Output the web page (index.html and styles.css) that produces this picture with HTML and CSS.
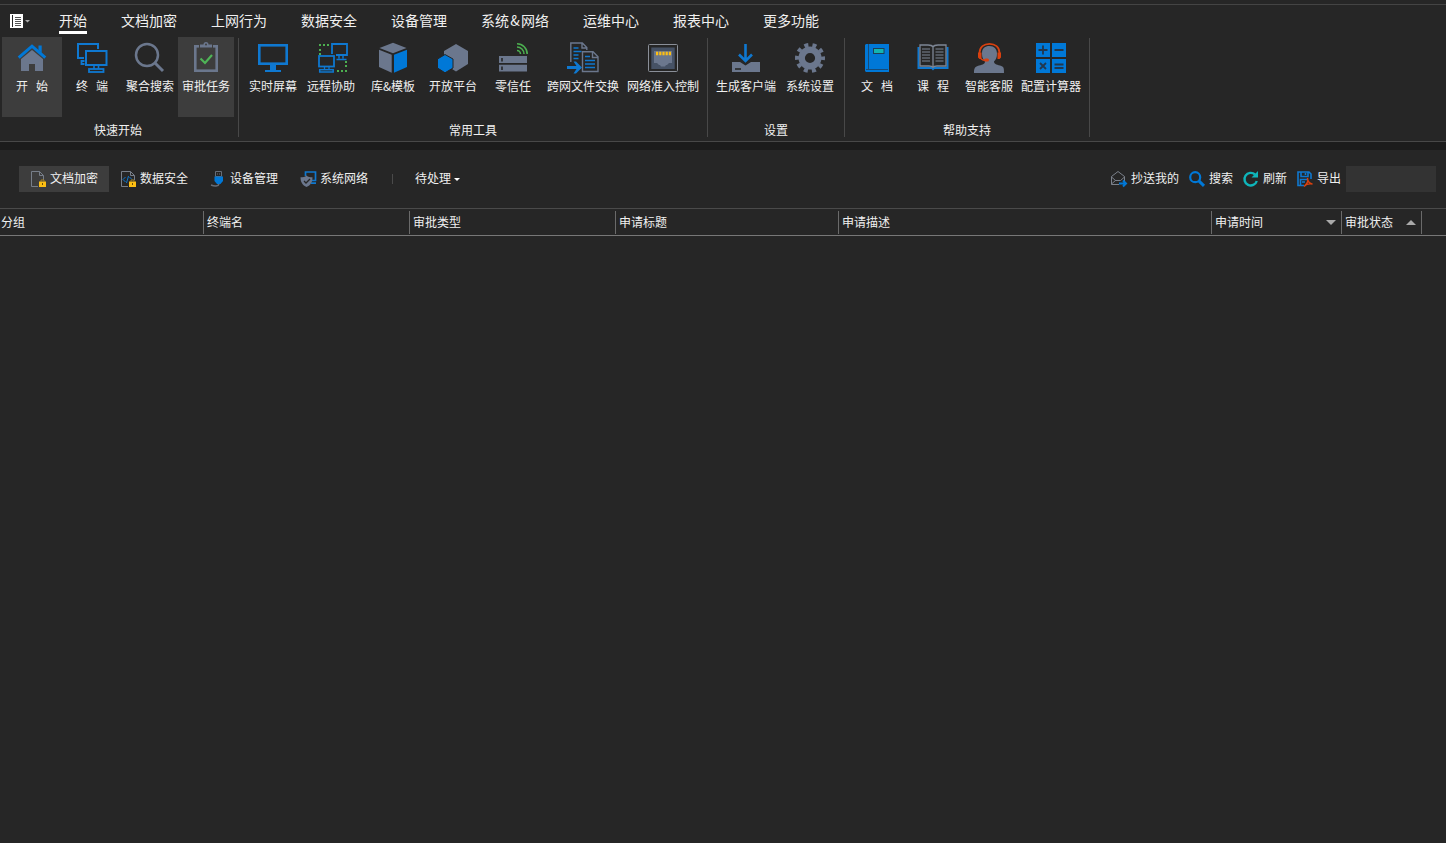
FILE: index.html
```
<!DOCTYPE html>
<html lang="zh-CN">
<head>
  <meta charset="UTF-8">
  <meta name="viewport" content="width=device-width, initial-scale=1.0">
  <title>审批任务</title>
  <link rel="stylesheet" href="styles.css">
</head>
<body>
  <!-- Top menu tabs -->
  <nav class="menu">
    <button class="app-menu">
      <svg width="20" height="14" viewBox="0 0 20 14">
        <rect width="13" height="14" fill="#fff"/>
        <path d="M2.5 1v12" stroke="#262626"/>
        <path d="M5 3.5h6M5 5.5h6M5 7.5h6M5 9.5h6M5 11.5h6" stroke="#555"/>
        <path d="M15 6h5l-2.5 2.5z" fill="#aaa"/>
      </svg>
    </button>
    <a class="tab active">开始</a>
    <a class="tab">文档加密</a>
    <a class="tab">上网行为</a>
    <a class="tab">数据安全</a>
    <a class="tab">设备管理</a>
    <a class="tab">系统<span class="amp">&amp;</span>网络</a>
    <a class="tab">运维中心</a>
    <a class="tab">报表中心</a>
    <a class="tab">更多功能</a>
  </nav>

  <!-- Ribbon -->
  <div class="ribbon">
    <div class="group first">
      <div class="tools">
        <button class="tool w60 selected">
          <svg viewBox="0 0 32 32">
            <path d="M5 17L16 8l11 9v12h-8v-7h-6v7H5z" fill="#6b778d"/>
            <path d="M22.5 3.500h3.200V11l-3.200-3z" fill="#0078d7"/>
            <path d="M2.700 15.700L16 4.200l13.300 11.500" fill="none" stroke="#0078d7" stroke-width="3"/>
          </svg>
          <span class="spaced">开始</span>
        </button>
        <button class="tool w60">
          <svg viewBox="0 0 32 32" fill="none" stroke="#0f78d0" stroke-width="2">
            <path d="M22 7V2H2v14h6"/>
            <path d="M8.500 19H5.500v3H8.500" stroke-width="1.800"/>
            <rect x="10" y="9" width="20.500" height="14"/>
            <path d="M18 24v3M22.500 24v3" stroke-width="1.600"/>
            <rect x="13" y="27" width="14.500" height="3" stroke-width="1.800"/>
          </svg>
          <span class="spaced">终端</span>
        </button>
        <button class="tool w56">
          <svg class="left" viewBox="0 0 32 32" fill="none" stroke="#6b778d">
            <circle cx="14" cy="13" r="11" stroke-width="2.500"/>
            <path d="M22 21l8 8" stroke-width="3"/>
          </svg>
          <span>聚合搜索</span>
        </button>
        <button class="tool w56 selected">
          <svg viewBox="0 0 32 32" fill="none" stroke="#6b778d">
            <rect x="5.300" y="4.300" width="21.400" height="24.400" stroke-width="2.600"/>
            <path d="M9 2v5h14V2z" fill="#3d3d3d" stroke="none"/>
            <path d="M10 2.500h3.500a2.500 2.500 0 0 1 5 0H22v3H10z" fill="#6b778d" stroke="none"/>
            <circle cx="16" cy="2.500" r="1" fill="#3d3d3d" stroke="none"/>
            <path d="M10.500 16.500l4.500 4.500 7-8" stroke="#4fb457" stroke-width="2.200"/>
          </svg>
          <span>审批任务</span>
        </button>
      </div>
      <div class="group-name">快速开始</div>
    </div>

    <div class="group">
      <div class="tools">
        <button class="tool w60">
          <svg viewBox="0 0 32 32">
            <rect x="2.300" y="3.300" width="27.400" height="18.400" fill="none" stroke="#0f78d0" stroke-width="2.600"/>
            <path d="M13 22h6v6h5v2H8v-2h5z" fill="#0f78d0"/>
          </svg>
          <span>实时屏幕</span>
        </button>
        <button class="tool w60">
          <svg viewBox="0 0 32 32" fill="none" stroke="#0f78d0" stroke-width="1.800">
            <path d="M2 3h10M3 7v7M20 29h10M29 19v8" stroke="#4caf50" stroke-width="2" stroke-dasharray="2 2"/>
            <path d="M15 12V2h15v11H19"/>
            <path d="M19.500 17.500h10M22 14v2.500M26 14v2.500" stroke-width="1.500"/>
            <rect x="2" y="14" width="15" height="10.500"/>
            <path d="M7.500 25v3M12 25v3" stroke-width="1.300"/>
            <rect x="2.700" y="27.700" width="13.500" height="2.300" stroke-width="1.500"/>
          </svg>
          <span class="nudge">远程协助</span>
        </button>
        <button class="tool w60">
          <svg viewBox="0 0 32 32">
            <path d="M16 .8L29.500 6 16 11.200 2.500 6zM2 7.800l12.700 5v18L2 25z" fill="#6b778d"/>
            <path d="M17 12.800l13-5V25l-13 5.800z" fill="#0078d7"/>
          </svg>
          <span>库&amp;模板</span>
        </button>
        <button class="tool w60">
          <svg viewBox="0 0 32 32">
            <path d="M19 2l12 7v13l-12 7.500L7 22V9z" fill="#6b778d"/>
            <path d="M8 12.500l8 4.500v9l-8 4.800L.5 26v-9z" fill="#0078d7" stroke="#262626"/>
          </svg>
          <span>开放平台</span>
        </button>
        <button class="tool w60">
          <svg viewBox="0 0 32 32">
            <path d="M2 14h28v7H2zM2 22.800h28v6.700H2z" fill="#6b778d"/>
            <path d="M5 16v3.500M5 24.500V28" stroke="#262626" stroke-width="1.600"/>
            <path d="M20 8.500a3.500 3.500 0 0 1 3.500 3.500M20 5a7 7 0 0 1 7 7M20 1.800A10.200 10.200 0 0 1 30.200 12" fill="none" stroke="#4caf50" stroke-width="1.600"/>
          </svg>
          <span>零信任</span>
        </button>
        <button class="tool w80">
          <svg viewBox="0 0 32 32" fill="none" stroke-width="1.400">
            <path d="M3.800 20V1h11.500l4.500 4.500V8M15 1v5h5M14 26h-3" stroke="#6b778d"/>
            <path d="M6.500 6h5M6.500 9.500h8M6.500 13h5M6.500 16.500h5" stroke="#0f78d0"/>
            <path d="M15.500 29.500V9.800H26l5 5v14.700zM25.500 10v5.500H31" stroke="#6b778d"/>
            <path d="M18 14.500h5M18 18.500h10M18 22h10M18 25.500h10" stroke="#0f78d0"/>
            <path d="M0 25.500h12M6.500 19.500h2.500l6 6-6 6H6.500l4-6z" stroke="none" fill="#0f78d0"/>
            <path d="M0 25.500h12" stroke="#0f78d0" stroke-width="3"/>
          </svg>
          <span>跨网文件交换</span>
        </button>
        <button class="tool w80">
          <svg viewBox="0 0 32 32">
            <rect x="1.500" y="2.500" width="29" height="27" rx="1" fill="none" stroke="#8a8f98"/>
            <rect x="4.300" y="5.500" width="23.400" height="21.500" fill="#465265"/>
            <path d="M7 9h18v12h-3l-2 2h-1l-1 1.500h-4L13 23h-1l-2-2H7z" fill="#6b778d"/>
            <path d="M9 11.500h15" stroke="#fdbf13" stroke-width="3.400" stroke-dasharray="2.200 1"/>
          </svg>
          <span>网络准入控制</span>
        </button>
      </div>
      <div class="group-name">常用工具</div>
    </div>

    <div class="group">
      <div class="tools">
        <button class="tool w68">
          <svg viewBox="0 0 32 32">
            <path d="M2 20h8l5.500 3.500L21 20h9v10H2z" fill="#6b778d"/>
            <path d="M5 27h6" stroke="#262626" stroke-width="1.600"/>
            <path d="M15.500 2v17M9 12.500l6.500 6.500 6.500-6.500" fill="none" stroke="#0f78d0" stroke-width="2.600"/>
          </svg>
          <span>生成客户端</span>
        </button>
        <button class="tool w60">
          <svg viewBox="0 0 32 32" fill="none" stroke="#6b778d">
            <circle cx="16" cy="16" r="8.300" stroke-width="6.400"/>
            <circle cx="16" cy="16" r="13" stroke-width="4" stroke-dasharray="4 4.168" stroke-dashoffset="2"/>
          </svg>
          <span>系统设置</span>
        </button>
      </div>
      <div class="group-name">设置</div>
    </div>

    <div class="group">
      <div class="tools">
        <button class="tool w56">
          <svg viewBox="0 0 32 32">
            <path d="M5 2h23v28H5l-1-1V3z" fill="#0078d7"/>
            <path d="M7.500 2v25M5 27.500h22" stroke="#164b78" fill="none"/>
            <rect x="12.500" y="6.500" width="10.500" height="5" fill="#13b5b1" stroke="#1c3e57"/>
          </svg>
          <span class="spaced">文档</span>
        </button>
        <button class="tool w56">
          <svg viewBox="0 0 32 32" fill="none">
            <path d="M1.500 5v21H15l1 1 1-1h13.500V5" stroke="#0f78d0" stroke-width="2"/>
            <path d="M16 5c-1-2-3-2-5-2H3v21h9c2 0 3 0 4 1.500C17 24 18 24 20 24h9V3h-8c-2 0-4 0-5 2zv20" stroke="#7d8695" stroke-width="1.300" fill="#262626"/>
            <path d="M5 7h8M5 10h8M5 13h8M5 16h8M5 19h8M18.500 7h8M18.500 10h8M18.500 13h8M18.500 16h8M18.500 19h8" stroke="#7d8695"/>
          </svg>
          <span class="spaced">课程</span>
        </button>
        <button class="tool w56">
          <svg viewBox="0 0 32 32">
            <path d="M1 31c0-5 1-6.500 5-7.500 4-1 6-1.500 6-4-2-2-3-4-3-8C9 6 12 4 16.500 4S24 7 24 11.500c0 4-1 6-3 8 0 2.500 2 3 6 4s4 2.500 4 7.500z" fill="#6b778d"/>
            <path d="M6.500 11C6.500 5 11 1.800 16.500 1.800S26.500 5 26.500 11" fill="none" stroke="#d9400f" stroke-width="1.700"/>
            <path d="M5 10.500h3.500V17h-2L5 15.500zM24.500 10.500H28v5L26.500 17h-2z" fill="#d9400f"/>
            <path d="M7.500 16c1 2 3 2.500 6 2.500" fill="none" stroke="#d9400f" stroke-width="1.300"/>
            <rect x="11" y="16.500" width="5" height="3" rx="1.500" fill="#d9400f"/>
          </svg>
          <span>智能客服</span>
        </button>
        <button class="tool w68">
          <svg viewBox="0 0 32 32">
            <path d="M1 1h14v14H1zM17 1h14v14H17zM1 17h14v14H1zM17 17h14v14H17z" fill="#0078d7"/>
            <path d="M3.500 8h9M8 3.500v9M19.500 8h9M5 21l6 6M11 21l-6 6M19.500 22.500h9M19.500 26h9" stroke="#22374d" stroke-width="1.800"/>
          </svg>
          <span>配置计算器</span>
        </button>
      </div>
      <div class="group-name">帮助支持</div>
    </div>
  </div>

  <!-- Filter bar -->
  <div class="toolbar">
    <button class="filter selected">
      <svg viewBox="0 0 16 16">
        <path d="M7 15.500H.5V.5h8l4 4V9M8.500.5v4h4" fill="none" stroke="#777e89"/>
        <path d="M10 10.500V9h3v1.500" fill="none" stroke="#a8821f"/>
        <path d="M8 10.500h7V16H8z" fill="#fdbf13"/>
        <path d="M11.500 12v2" stroke="#6b520c"/>
      </svg>
      <span>文档加密</span>
    </button>
    <button class="filter">
      <svg viewBox="0 0 16 16">
        <path d="M7 15.500H.5V.5h9l4 4V9M9.500.5v4h4" fill="none" stroke="#777e89"/>
        <path d="M4.500 6L2 8.500 4.500 11M8.500 6L11 8.500M7.500 5l-2 7" fill="none" stroke="#0f78d0"/>
        <path d="M10 10.500V9h3v1.500" fill="none" stroke="#a8821f"/>
        <path d="M8 10.500h7V16H8z" fill="#fdbf13"/>
        <path d="M11.500 12v2" stroke="#6b520c"/>
      </svg>
      <span>数据安全</span>
    </button>
    <button class="filter">
      <svg viewBox="0 0 16 16">
        <path d="M4.500.5h6v5h-6zM6.500 2.500v1M8.500 2.500v1" fill="none" stroke="#666d78"/>
        <path d="M3.500 5.500h8.500V10l-2.500 3h-3.500l-2.500-3z" fill="#0078d7"/>
        <path d="M0 14c3.500 1.500 7.500 1.500 8-1" fill="none" stroke="#666d78" stroke-width="1.500"/>
      </svg>
      <span>设备管理</span>
    </button>
    <button class="filter">
      <svg viewBox="0 0 16 16">
        <path d="M4.500 5V1h10v8.500h-4M10 12.200h5" fill="none" stroke="#0f78d0" stroke-width="1.700"/>
        <path d="M5.500 4.500C4 6 2 6.200-.5 6.200c0 5 2 8 6 9.800 4-1.800 6-4.800 6-9.800-2.500 0-4.500-.2-6-1.700z" fill="#6b778d"/>
        <path d="M3 10l2 2 4-4" fill="none" stroke="#262626" stroke-width="1.300"/>
      </svg>
      <span>系统网络</span>
    </button>
    <i class="divider"></i>
    <button class="status"><span>待处理</span><i class="caret"></i></button>

    <div class="actions">
      <button class="action">
        <svg viewBox="0 0 16 16" fill="none">
          <path d="M8 13.500H.5v-8L7 .5l6.500 5V10M.5 13l4.500-4M.5 6l4 3.500h5l4-3.500" stroke="#7b818b"/>
          <path d="M8 12.500h7M12 9.500l3 3-3 3" stroke="#0078d7" stroke-width="2"/>
        </svg>
        <span>抄送我的</span>
      </button>
      <button class="action">
        <svg viewBox="0 0 16 16" fill="none" stroke="#0078d7">
          <circle cx="6.200" cy="6.200" r="5" stroke-width="2.200"/>
          <path d="M9.800 9.800l5.200 5" stroke-width="3"/>
        </svg>
        <span>搜索</span>
      </button>
      <button class="action">
        <svg viewBox="0 0 16 16">
          <path d="M12 3.500A6.300 6.300 0 1 0 13.800 10" fill="none" stroke="#0fb5ba" stroke-width="2.400"/>
          <path d="M15 0v6.500H8.500z" fill="#0fb5ba"/>
        </svg>
        <span>刷新</span>
      </button>
      <button class="action">
        <svg viewBox="0 0 16 16">
          <path d="M7 14.500H1V1h11l2 2v5M4 1v4.500h7V1M3.500 14V8.500H10M8.500 2v2M5 11h3" fill="none" stroke="#0f78d0" stroke-width="1.600"/>
          <path d="M10.500 7c1 4-1 6-3.500 8.500 2-2.500 5-3 8.500-2.500-2.500 0-5-2.500-5-6z" fill="none" stroke="#d9400f" stroke-width="1.400"/>
        </svg>
        <span>导出</span>
      </button>
      <input class="search" type="text">
    </div>
  </div>

  <!-- Task list header -->
  <div class="list-head">
    <div class="col">分组</div>
    <div class="col">终端名</div>
    <div class="col">审批类型</div>
    <div class="col">申请标题</div>
    <div class="col">申请描述</div>
    <div class="col">申请时间<i class="sort down"></i></div>
    <div class="col">审批状态<i class="sort up"></i></div>
  </div>
</body>
</html>
```
FILE: styles.css
```
* {
  margin: 0;
  padding: 0;
  box-sizing: border-box;
}
body {
  font-family: "Noto Sans CJK SC", sans-serif;
  font-size: 12px;
  line-height: 18px;
  background-color: #262626;
  color: #f0f0f0;
  height: 100vh;
  overflow: hidden;
  padding-top: 4px;
}
button {
  font: inherit;
  color: inherit;
  background: none;
  border: none;
  white-space: nowrap;
}
svg {
  display: block;
  flex: none;
  overflow: visible;
}

/* Menu */
.menu {
  display: flex;
  align-items: flex-start;
  gap: 34px;
  height: 33px;
  border-top: 1px solid #444;
  padding-left: 10px;
}
.app-menu {
  width: 15px;
  padding-top: 9px;
}
.tab {
  height: 29px;
  padding-top: 5px;
  font-size: 14px;
  line-height: 20px;
  white-space: nowrap;
}
.tab.active {
  border-bottom: 3px solid #fff;
}
.amp {
  display: inline-block;
  width: 12px;
  text-align: center;
}

/* Ribbon */
.ribbon {
  display: flex;
  height: 105px;
  padding-top: 1px;
  border-bottom: 1px solid #484848;
  box-shadow: 0 8px 0 #1c1c1c;
}
.group {
  height: 99px;
  padding: 0 4px;
  border-right: 1px solid #484848;
}
.group.first {
  padding-left: 2px;
}
.tools {
  display: flex;
  margin-top: -1px;
}
.tool {
  display: flex;
  flex-direction: column;
  align-items: center;
  height: 80px;
  padding-top: 5px;
}
.tool svg {
  width: 32px;
  height: 32px;
  margin-bottom: 3px;
}
.tool svg.left {
  margin-right: 2px;
}
.w56 {
  width: 56px;
}
.w60 {
  width: 60px;
}
.w68 {
  width: 68px;
}
.w80 {
  width: 80px;
}
.selected {
  background-color: #3d3d3d;
}
.spaced {
  letter-spacing: 8px;
  margin-right: -8px;
}
.nudge {
  margin-right: 4px;
}
.group-name {
  text-align: center;
  padding-top: 4px;
}

/* Toolbar */
.toolbar {
  display: flex;
  align-items: center;
  height: 58px;
  margin-top: 8px;
  padding: 0 10px 0 19px;
}
.filter {
  display: flex;
  align-items: center;
  gap: 3px;
  width: 90px;
  height: 26px;
  padding-left: 12px;
}
.toolbar svg {
  width: 16px;
  height: 16px;
}
.toolbar span {
  margin-top: -2px;
}
.divider {
  width: 1px;
  height: 10px;
  margin-left: 13px;
  margin-right: 22px;
  background-color: #4a4a4a;
}
.status {
  display: flex;
  align-items: center;
}
.caret {
  margin-left: 3px;
  border: 3px solid transparent;
  border-top-color: #fff;
  border-bottom: 0;
}
.actions {
  display: flex;
  align-items: center;
  gap: 10px;
  margin-left: auto;
}
.action {
  display: flex;
  align-items: center;
  gap: 4px;
}
.search {
  width: 90px;
  height: 26px;
  margin-left: -5px;
  border: none;
  background-color: #333;
}

/* List header */
.list-head {
  display: grid;
  grid-template-columns: 204px 206px 206px 223px 373px 130px 80px;
  height: 28px;
  padding-top: 2px;
  border-top: 1px solid #4a4a4a;
  border-bottom: 1px solid #777;
}
.col {
  display: flex;
  align-items: center;
  height: 23px;
  padding: 0 5px 2px 3px;
  border-right: 1px solid #6a6a6a;
}
.col:first-child {
  padding-left: 1px;
}
.sort {
  margin-top: 2px;
  margin-left: auto;
  border: 5px solid transparent;
}
.sort.down {
  border-top-color: #aaa;
  border-bottom: 0;
}
.sort.up {
  border-bottom-color: #aaa;
  border-top: 0;
}
```
